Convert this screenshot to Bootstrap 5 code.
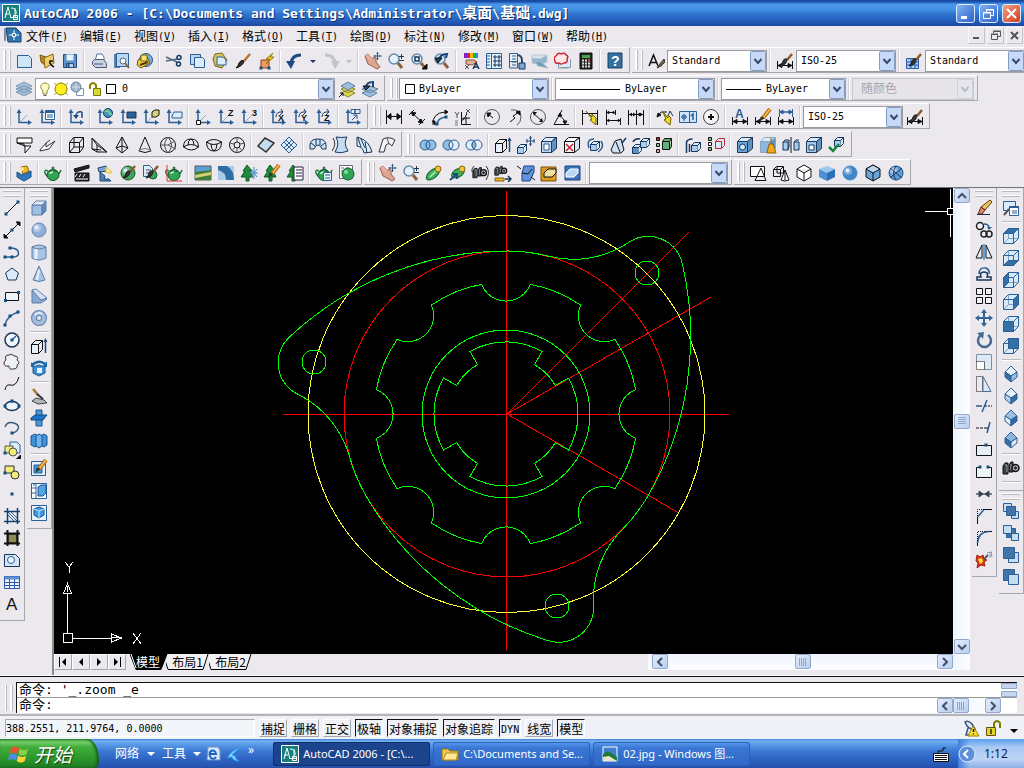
<!DOCTYPE html>
<html lang="zh-CN">
<head>
<meta charset="utf-8">
<meta name="viewport" content="width=device-width, initial-scale=1">
<title>AutoCAD 2006 - [C:\Documents and Settings\Administrator\桌面\基础.dwg]</title>
<link rel="stylesheet" href="https://cdn.jsdelivr.net/npm/bootstrap@5.3.0/dist/css/bootstrap.min.css">
<style>
:root{--face:#ebe9ed;--edge:#a7a6aa;--mono:"DejaVu Sans Mono","Noto Sans CJK SC",monospace}
body{background:var(--face);font:12px/16px "Noto Sans CJK SC",sans-serif;color:#000;min-height:100vh;overflow:hidden}
button{border:0;background:none;padding:0;color:inherit;font:inherit;line-height:16px}
svg{display:block;flex:none}
.lat{font-family:var(--mono);font-size:10px}
/* title and menu */
.titlebar{height:26px;padding:0 3px 0 2px;background:linear-gradient(#16459a 0,#1d55b4 2px,#4a96e6 4px,#4593e4 9px,#2f74cd 14px,#2560bf 20px,#1c479f 26px);color:#fff;text-shadow:1px 1px #0c2a6c;font:bold 13px/24px var(--mono)}
.titlebar .cjk{font-size:15px}
.winbtn{width:19px;height:19px;border:1px solid #dcebff;border-radius:3px;background:linear-gradient(135deg,#83b2f4,#2b62ca)}
.winbtn.shut{background:linear-gradient(135deg,#f0a184,#d23d1c)}
.menurow{height:21px;padding:0 1px 0 4px}
.menurow a{width:54px;height:20px;padding:2px 0 0 4px;color:#000;text-decoration:none;white-space:nowrap;display:block}
.menurow a .lat{vertical-align:1px}
.docbtn{width:17px;height:17px;margin:1px 0 0 2px;border:1px solid #f8f8fa;border-right-color:#c4c3c8;border-bottom-color:#c4c3c8}
/* toolbars */
.toolrow{height:28px}
.toolbox{height:26px;padding:2px 3px 0 12px;margin-right:2px;border:solid;border-width:1px 1px 1px 0;border-color:#fff var(--edge) var(--edge) #fff;position:relative;display:flex;align-items:center;flex:none}
.toolbox::before{content:"";position:absolute;left:3px;top:2px;bottom:2px;width:7px;border:solid #fff;border-width:0 2px;box-shadow:1px 0 #bab9be,inset 1px 0 #bab9be;border-right-width:1px}
.tool{width:23px;height:22px;display:flex;align-items:center;justify-content:center;flex:none}
.tool.slim{width:13px}
.cut{width:6px;height:22px;flex:none;background:linear-gradient(#cfced3,#cfced3) 2px 0/1px 100% no-repeat,linear-gradient(#fff,#fff) 3px 0/1px 100% no-repeat}
.vert{width:25px;height:auto;padding:9px 0 5px;flex-direction:column;margin:0 2px 0 0;border-width:0 1px 1px 0}
.vert::before{left:3px;right:3px;top:2px;bottom:auto;width:auto;height:6px;border-width:1px 0;box-shadow:0 1px #bab9be,inset 0 1px #bab9be}
.vert .cut{width:19px;height:6px;background:linear-gradient(#bab9be,#bab9be) 0 2px/100% 1px no-repeat,linear-gradient(#fff,#fff) 0 3px/100% 1px no-repeat}
.pick{position:relative;flex:none}
.pick select{width:100%;height:22px;border:1px solid #9a9aa2;border-radius:0;appearance:none;padding:0 18px 0 4px;color:#000;font:10px/18px var(--mono);background:#fff url("data:image/svg+xml,%3Csvg xmlns='http://www.w3.org/2000/svg' width='16' height='20'%3E%3Crect x='.5' y='.5' width='15' height='19' rx='1' fill='%23c8d9f7' stroke='%237f9dc2'/%3E%3Cpath d='M4.500 8l3.500 4 3.500-4' fill='none' stroke='%23354a6c' stroke-width='2'/%3E%3C/svg%3E") right center no-repeat}
.pick select:disabled{background-color:#e7e5ea;color:#a7a6aa;border-color:#c9c7ce;opacity:1;font-size:12px;background-image:url("data:image/svg+xml,%3Csvg xmlns='http://www.w3.org/2000/svg' width='16' height='20'%3E%3Crect x='.5' y='.5' width='15' height='19' rx='1' fill='%23e6e7ee' stroke='%23cfd1da'/%3E%3Cpath d='M4.500 8l3.500 4 3.500-4' fill='none' stroke='%23b9bcc9' stroke-width='2'/%3E%3C/svg%3E")}
.pick .over{position:absolute;left:4px;top:3px;pointer-events:none}
.w100{width:100px}.w125{width:125px}.w139{width:139px}.w150{width:150px}.w160{width:160px}.w122{width:122px}.w300{width:300px}
.pick.colour select{padding-left:19px}.pick.wide select{padding-left:69px}.pick.mid select{padding-left:44px}.pick.layer select{padding-left:86px}
.pick.faint select{padding-left:8px}
/* work area */
.work{border-top:1px solid #77767b;min-height:0}
.leftdock{width:54px;border-right:2px solid #8d8c92}
.rightdock{width:54px;padding-left:2px}
.paper{background:#000;min-width:0}
.paper svg{width:100%;height:100%}
.bar{background:linear-gradient(90deg,#eef3fd,#fdfeff);flex:none}
.bar.side{width:17px}
.bar.flat{width:305px;height:16px;background:linear-gradient(#eef3fd,#fdfeff)}
.nub{width:16px;height:15px;border:1px solid #93a9cc;border-radius:2px;background:linear-gradient(135deg,#e2ecfd,#bccfee);display:flex;align-items:center;justify-content:center;flex:none}
.tabs{height:16px;margin-bottom:5px;flex:none}
.step{width:18px;height:16px;border:1px solid;border-color:#fff var(--edge) var(--edge) #fff;display:flex;align-items:center;justify-content:center}
.sheet{position:relative;height:16px;width:43px;line-height:14px;z-index:0;text-align:center;white-space:nowrap}
.sheet svg{position:absolute;inset:0;z-index:-1}
.sheet.on{color:#fff;width:36px;z-index:1}
/* command window, status, taskbar */
.cmdwrap{border-top:1px solid #fff;padding:6px 7px 0 5px;height:39px;box-shadow:inset 0 1px #111}
.cmdgrip{width:7px;height:26px;margin:3px 4px 0 0;border:solid #fff;border-width:0 2px 0 1px;box-shadow:1px 0 #bab9be,inset 1px 0 #bab9be}
.cmdbox{border:solid #111;border-width:1px 0 0 1px;background:#fff;font:13px/14px var(--mono);height:31px}
.cmdbox .cjk{font-size:13px}
.cmdbox>div{height:14px;padding-left:2px;white-space:pre}
.cmdbox input{border:0;outline:0;padding:0;background:none;font:inherit;height:14px;min-width:0}
.cmdbox>div:first-child{border-bottom:1px solid #999;height:15px}
.status{height:25px;border-top:2px solid #b5b4b9;background:#f0f1f6;padding:1px 5px 0}
.coord{width:250px;height:18px;border:1px solid;border-color:#a9a8ae #fff #fff #a9a8ae;background:#f2f5fa;line-height:17px}
.mode{height:18px;padding:0 1px;border:1px solid;border-color:#fff #a7a6aa #a7a6aa #fff;background:#f0f1f6;white-space:nowrap;line-height:17px}
.mode.on{border-color:#111 #fff #fff #111}
.mode .lat{vertical-align:1px}
.task{height:29px;background:linear-gradient(#3f7fdb 0,#74b0f1 2px,#5b9cea 5px,#3c79d3 12px,#2f64c4 20px,#2450ab 29px);color:#fff;font-family:"Noto Sans","Noto Sans CJK SC",sans-serif}
.startbtn{width:99px;height:29px;border-radius:0 12px 4px 0/0 22px 8px 0;background:linear-gradient(#3f9e3c 0,#76cf6c 3px,#41ad3c 8px,#2e9a2d 18px,#1f7d23 29px);box-shadow:inset -2px 0 3px #135a18;text-shadow:1px 1px 1px #124515;font:italic 19px/26px "Noto Sans CJK SC",sans-serif}
.tasklist{padding-left:15px}
.taskbtn{width:157px;height:24px;margin-right:3px;border-radius:3px;background:linear-gradient(#5c9bec,#3a76d4 6px,#2f68c6);box-shadow:inset 0 0 0 1px #2c60bd;font-size:11px;white-space:nowrap;overflow:hidden}
.taskbtn.on{background:#1c448d;box-shadow:inset 0 0 0 1px #10306d}
.tray{width:66px;background:linear-gradient(90deg,#3f7ddb 0,#3f7ddb00 12px),linear-gradient(#5aa0ee,#a9c8f4 8px,#bcd3f5 20px,#8fb1e6);color:#0b1e4c;font-size:12px}
</style>
</head>
<body class="d-flex flex-column vh-100">
<header class="titlebar d-flex align-items-center">
  <span data-art="appicon" class="me-1"></span>
  <span class="flex-grow-1 text-nowrap">AutoCAD 2006 - [C:\Documents and Settings\Administrator\<span class="cjk">桌面</span>\<span class="cjk">基础</span>.dwg]</span>
  <div class="d-flex gap-1">
    <button class="winbtn" aria-label="最小化"><svg width="17" height="17"><path d="M4 12.500h6" stroke="#fff" stroke-width="3"/></svg></button>
    <button class="winbtn" aria-label="还原"><svg width="17" height="17" fill="none" stroke="#fff"><path d="M6.500 7V4.500h7v6H11M6 5h8M3.500 7.500h7v6h-7zM3 8h8"/></svg></button>
    <button class="winbtn shut" aria-label="关闭"><svg width="17" height="17"><path d="M4 4l9 9M13 4l-9 9" stroke="#fff" stroke-width="2"/></svg></button>
  </div>
</header>
<nav class="menurow d-flex align-items-start" aria-label="菜单">
  <span data-art="docicon"></span>
  <div class="d-flex flex-grow-1" id="menus"></div>
  <div class="d-flex">
    <button class="docbtn" aria-label="最小化文档"><svg width="15" height="15"><path d="M4 10h6" stroke="#555" stroke-width="2"/></svg></button>
    <button class="docbtn" aria-label="还原文档"><svg width="15" height="15" fill="none" stroke="#555"><path d="M5.500 5V3.500h7v5H10M3.500 6.500h6v5h-6zM3 6h7M5 3h8"/></svg></button>
    <button class="docbtn" aria-label="关闭文档"><svg width="15" height="15"><path d="M4 4l7 7M11 4l-7 7" stroke="#555" stroke-width="2"/></svg></button>
  </div>
</nav>

<div class="toolrow d-flex overflow-hidden">
  <div class="toolbox" data-tools="new open save | plot preview publish | cut copy paste match block | undo more redo moreoff | pan zoomrt zoomwin zoomprev | props dcenter palettes sheetset markup calc | help"></div>
  <div class="toolbox"><span data-tools="textstyle"></span>
    <div class="pick w100"><select aria-label="文字样式"><option>Standard</option></select></div><i class="cut"></i>
    <span data-tools="dimstyle"></span><div class="pick w100"><select aria-label="标注样式"><option>ISO-25</option></select></div><i class="cut"></i>
    <span data-tools="tablestyle"></span><div class="pick w100"><select aria-label="表格样式"><option>Standard</option></select></div>
  </div>
</div>
<div class="toolrow d-flex overflow-hidden">
  <div class="toolbox"><span data-tools="layers"></span>
    <div class="pick layer w300"><select aria-label="图层"><option>0</option></select><svg class="over" width="80" height="16"><use href="#layerflags"/></svg></div>
    <span data-tools="laycur layprev"></span>
  </div>
  <div class="toolbox">
    <div class="pick colour w150"><select aria-label="颜色"><option>ByLayer</option></select><svg class="over" width="16" height="16"><path d="M2.500 3.500h9v9h-9z" fill="#fff" stroke="#000"/></svg></div><i class="cut"></i>
    <div class="pick wide w160"><select aria-label="线型"><option>ByLayer</option></select><svg class="over" width="62" height="16"><path d="M1 8.500h60" stroke="#000"/></svg></div><i class="cut"></i>
    <div class="pick mid w125"><select aria-label="线宽"><option>ByLayer</option></select><svg class="over" width="36" height="16"><path d="M1 8.500h35" stroke="#000"/></svg></div><i class="cut"></i>
    <div class="pick faint w122"><select aria-label="打印样式" disabled><option>随颜色</option></select></div>
  </div>
</div>
<div class="toolrow d-flex overflow-hidden">
  <div class="toolbox" data-tools="ucs ucslist | ucsprev | ucsworld ucsobject ucsface ucsview | ucsorigin ucsz ucs3 | ucsrx ucsry ucsrz | ucsapply"></div>
  <div class="toolbox"><span data-tools="dimlin dimali dimarc dimord | dimrad dimjog dimdia dimang | dimquick dimbase dimcont | leader toler center | dimedit dimtedit dimupd |"></span>
    <div class="pick w100"><select aria-label="当前标注样式"><option>ISO-25</option></select></div><span data-tools="dimstyle"></span>
  </div>
</div>
<div class="toolrow d-flex overflow-hidden">
  <div class="toolbox" data-tools="solid2d face3d | mbox mwedge mpyr mcone msphere mdome mdish mtorus | edge mesh | revsurf tabsurf rulesurf edgesurf"></div>
  <div class="toolbox" data-tools="union subtract intersect | extface moveface offface delface rotface tapface copyface colface | copyedge coledge | imprint clean separate shell check"></div>
</div>
<div class="toolrow d-flex overflow-hidden">
  <div class="toolbox" data-tools="hide | render | scene light material matlib uvmap | backgr fog lsnew lsedit lslib | rprefs rstats"></div>
  <div class="toolbox"><span data-tools="pan zoomrt orbit orbitc swivel distance clipadj clipfront clipback |"></span>
    <div class="pick w139"><select aria-label="命名视图"><option></option></select></div></div>
  <div class="toolbox" data-tools="wire2d wire3d hidden flat gouraud flatedge gouedge"></div>
</div>

<main class="work d-flex flex-grow-1">
  <div class="leftdock d-flex align-items-start flex-shrink-0">
    <div class="toolbox vert" data-tools="line xline pline polygon rect arc circle cloud spline ellipse elarc insert mkblock point hatch gradient region table mtext"></div>
    <div class="toolbox vert" data-tools="sbox ssphere scyl scone swedge storus | extface revolve | slice section interfere | soldraw solview solprof"></div>
  </div>
  <div class="d-flex flex-column flex-grow-1">
    <div class="d-flex flex-grow-1 overflow-hidden">
      <div class="paper flex-grow-1">
        <svg viewBox="54 188 899 466" fill="none" shape-rendering="crispEdges" role="img" aria-label="图形">
          <g stroke="#f00"><path d="M506.500 191V650M283 414.500H729M507 414L689 232M507 414L711 297M507 414L679 513"/><circle cx="507" cy="414" r="163"/></g>
          <circle cx="506.500" cy="414" r="198.500" stroke="#ff3"/>
          <g stroke="#0f0">
            <circle cx="506" cy="414" r="84"/><circle cx="314" cy="362" r="12"/><circle cx="647" cy="273" r="12"/><circle cx="557" cy="606" r="12"/>
            <path d="M290 336.500A319 319 0 0 1 507 251A163 163 0 0 1 547.500 256A100 100 0 0 0 627 243.500A35 35 0 0 1 682.700 265.500A319 319 0 0 1 648.200 495.500A163 163 0 0 1 623.600 528.100A100 100 0 0 0 593.500 603.700A35 35 0 0 1 547.900 640.600A319 319 0 0 1 365.800 495.500A163 163 0 0 1 349.900 457.900A100 100 0 0 0 299 394.800A35 35 0 0 1 290 336.500Z"/>
            <path id="gear"/><path id="bore"/>
          </g>
          <g stroke="#fff"><path d="M63.500 633.500h9v9h-9zM67.500 633V594M73 638.500h38M63.500 593.500h8l-4-10zM67.500 592v-6M111.500 634v8l10-4zM112 637.500h8M925 211.500h22M950.500 189v19M950.500 215v22M947.500 208.500h6v6h-6z"/>
          <path d="M65 562l4 5 4-5M69.500 567v6M133 633l8 11M141 633l-8 11"/></g>
        </svg>
      </div>
      <div class="bar side d-flex flex-column justify-content-between align-items-center">
        <button class="nub" aria-label="向上"><svg width="10" height="8"><path d="M1 6l4-4 4 4" fill="none" stroke="#40506c" stroke-width="2"/></svg></button>
        <button class="nub" aria-label="滚动块"><svg width="8" height="8"><path d="M0 .5h8M0 2.500h8M0 4.500h8M0 6.500h8" stroke="#8fa6cc"/></svg></button>
        <button class="nub" aria-label="向下"><svg width="10" height="8"><path d="M1 2l4 4 4-4" fill="none" stroke="#40506c" stroke-width="2"/></svg></button>
      </div>
    </div>
    <div class="tabs d-flex">
      <button class="step" aria-label="第一个"><svg width="10" height="10"><path d="M1 0h1v10H1zM8 1v8L4 5z"/></svg></button>
      <button class="step" aria-label="上一个"><svg width="10" height="10"><path d="M7 1v8L3 5z"/></svg></button>
      <button class="step" aria-label="下一个"><svg width="10" height="10"><path d="M3 1v8l4-4z"/></svg></button>
      <button class="step me-1" aria-label="最后一个"><svg width="10" height="10"><path d="M8 0h1v10H8zM2 1v8l4-4z"/></svg></button>
      <button class="sheet on"><svg width="40" height="16"><path d="M0 0l6 15.500h25L37 0z" stroke="#000"/><path d="M1 0l5 14" stroke="#fff"/></svg>模型</button>
      <button class="sheet"><svg width="43" height="16"><path d="M-3 0l5 15.500h35L42 0" fill="#f2f1f5" stroke="#000"/></svg>布局1</button>
      <button class="sheet"><svg width="43" height="16"><path d="M-3 0l5 15.500h35L42 0" fill="#f2f1f5" stroke="#000"/></svg>布局2</button>
      <div class="flex-grow-1"></div>
      <div class="bar flat d-flex justify-content-between ps-1">
        <button class="nub" aria-label="向左"><svg width="8" height="10"><path d="M6 1L2 5l4 4" fill="none" stroke="#40506c" stroke-width="2"/></svg></button>
        <button class="nub" aria-label="水平滚动块"><svg width="8" height="8"><path d="M.5 0v8M2.500 0v8M4.500 0v8M6.500 0v8" stroke="#8fa6cc"/></svg></button>
        <button class="nub" aria-label="向右"><svg width="8" height="10"><path d="M2 1l4 4-4 4" fill="none" stroke="#40506c" stroke-width="2"/></svg></button>
      </div>
      <div class="bar side bg-transparent"></div>
    </div>
  </div>
  <div class="rightdock d-flex align-items-start flex-shrink-0">
    <div class="toolbox vert" data-tools="erase cpy mirror offset array move rotate scale stretch trim extend brkpt brk join chamfer fillet explode"></div>
    <div>
      <div class="toolbox vert" data-tools="namedview | vtop vbot vleft vright vfront vback | isw ise ine inw | camera |"></div>
      <div class="toolbox vert" data-tools="ordfront ordback ordabove ordunder"></div>
    </div>
  </div>
</main>

<section class="cmdwrap d-flex" aria-label="命令窗口">
  <div class="cmdgrip"></div>
  <div class="cmdbox flex-grow-1">
    <div class="d-flex"><span class="flex-grow-1"><span class="cjk">命令</span>: '_.zoom _e</span><svg width="16" height="14"><path d="M.5.5h15v5h-15zM.5 8.500h15v5h-15z" fill="#c6d6f0" stroke="#90a6c8"/></svg></div>
    <div class="d-flex"><label for="cmd"><span class="cjk">命令</span>:</label><input id="cmd" class="flex-grow-1">
      <span class="bar d-flex me-3"><button class="nub" aria-label="命令向左"><svg width="8" height="10"><path d="M6 1L2 5l4 4" fill="none" stroke="#40506c" stroke-width="2"/></svg></button><button class="nub me-3" aria-label="命令滚动块"><svg width="8" height="8"><path d="M.5 0v8M2.500 0v8M4.500 0v8M6.500 0v8" stroke="#8fa6cc"/></svg></button><button class="nub" aria-label="命令向右"><svg width="8" height="10"><path d="M2 1l4 4-4 4" fill="none" stroke="#40506c" stroke-width="2"/></svg></button></span></div>
  </div>
</section>
<section class="status d-flex align-items-center gap-1">
  <div class="coord lat">388.2551, 211.9764, 0.0000</div>
  <button class="mode">捕捉</button><button class="mode">栅格</button><button class="mode">正交</button><button class="mode on">极轴</button><button class="mode on">对象捕捉</button><button class="mode on">对象追踪</button><button class="mode on"><span class="lat">DYN</span></button><button class="mode">线宽</button><button class="mode on">模型</button>
  <div class="flex-grow-1"></div>
  <button aria-label="通信中心" data-art="comm"></button><button aria-label="锁定" data-art="lock" class="me-1"></button><button aria-label="状态栏菜单"><svg width="9" height="18"><path d="M0 10h8l-4 4z"/></svg></button>
</section>
<footer class="task d-flex align-items-center">
  <button class="startbtn d-flex align-items-center ps-2"><svg width="22" height="20" viewBox="0 0 22 20" class="me-1"><path d="M3 4q4-3 8 0L9.500 10q-4-3-8 0z" fill="#e8542c"/><path d="M12 4.500q4 3 8 0L18.500 10q-4 3-8 0z" fill="#8fd04a"/><path d="M1.200 11q4-3 8 0L8 16.500q-4-3-8 0z" fill="#4b8cf0"/><path d="M10.200 11.500q4 3 8 0l-1.500 5.500q-4 3-8 0z" fill="#fbd33c"/></svg>开始</button>
  <div class="d-flex align-items-center ps-3 flex-shrink-0">
    <button>网络</button><svg width="23" height="8"><path d="M8 2h8l-4 4z" fill="#fff"/></svg><button>工具</button><svg width="18" height="8"><path d="M7 2h8l-4 4z" fill="#fff"/></svg>
    <button aria-label="浏览器" class="me-1" data-art="ie"></button><button aria-label="快捷方式" data-art="swoosh"></button><button class="px-1 mb-2" aria-label="更多">»</button>
  </div>
  <div class="tasklist d-flex flex-grow-1" id="tasks"></div>
  <span data-art="keyboard" class="me-2"></span>
  <div class="tray h-100 d-flex align-items-center"><span data-art="traytog"></span><span class="ps-2">1:12</span></div>
</footer>
<svg width="0" height="0" class="position-absolute"><symbol id="layerflags" viewBox="0 0 80 16"><path d="M4 10C0 6 2 2 6 2s6 4 2 8v3H4z" fill="#fffbc0" stroke="#8a8440"/><path d="M4.500 14.500h3" stroke="#555"/><path d="M15 2l14 12M29 2L15 14" stroke="#b8a500"/><circle cx="22" cy="8" r="6" fill="#ffee22" stroke="#8a7c00"/><path d="M37.500 7.500h7v7h-7z" fill="#fff" stroke="#8794ac"/><circle cx="37" cy="6" r="5" fill="#9fb4cc" stroke="#66829f"/><path d="M33 6h8M37 2v8" stroke="#d6e2ee"/><path d="M51 8V4q3-4 6 0v7" fill="none" stroke="#8a8500" stroke-width="2"/><path d="M54.500 7.500h7v7h-7z" fill="#d8d838" stroke="#7a7800"/><path d="M67.500 3.500h9v9h-9z" fill="#fff" stroke="#000"/></symbol></svg>

<script src="https://cdn.jsdelivr.net/npm/bootstrap@5.3.0/dist/js/bootstrap.bundle.min.js"></script>
<script>
// Icon drawings on an 18 x 18 grid.
const p=(d,f='none',s='#111',w=1)=>`<path d="${d}" fill="${f}" stroke="${s}" stroke-width="${w}"/>`;
const o=(x,y,r,f='none',s='#111',w=1)=>`<circle cx="${x}" cy="${y}" r="${r}" fill="${f}" stroke="${s}" stroke-width="${w}"/>`;
const B='#2b5f97',D='#16365c',L='#a9cdee',P='#dcebf9',N='none';
const cube=(f=L,t=P,s='#5e93c4',k='#1f3a5a')=>p('M1.500 5.500h10v11h-10z',f,k)+p('M1.500 5.500l4-4h11l-5 4z',t,k)+p('M11.500 5.500l5-4v11l-5 4z',s,k);
const mini=(x,y)=>p(`M${x+.5} ${y+3.500}h6v6h-6z`,L,D)+p(`M${x+.5} ${y+3.500}l3-3h6l-3 3zM${x+6.500} ${y+3.500}l3-3v6l-3 3`,P,D);
const ucs=p('M4 3v11.500H15',N,B,1.500)+p('M1.500 5L4 1l2.500 4zM13 12l4 2.500-4 2.500z',B,B,0);
const axis=ucs+p('M5 14l7-7',N,'#8fa9c6',1);
const tx=(x,y,t,c='#111',s=9)=>`<text x="${x}" y="${y}" fill="${c}" font-family="Liberation Sans" font-weight="bold" font-size="${s}">${t}</text>`;
const brush=p('M16 2l-5 6',N,'#8d5a2a',2.500)+p('M11 7q0 6-7 7 3-3 3-5 1-3 4-2z','#333','#222');
const pencil=p('M16 1L9 10',N,'#b26a1c',4)+p('M16 1L9 10',N,'#f4b840',2)+p('M10 10l-4 3 1-4z','#333','#333');
const doc=(x,y,w=9,h=11)=>p(`M${x+.5} ${y+.5}h${w-3}l3 3v${h-3}h-${w}z`,P,B);
const lens=o(7,7,5,'#e2f1fb','#6a88a4',1.500)+p('M11 11l4 5',N,'#8d6238',3);
const dim=p('M1.500 9v8M16.500 9v8M2 13.500h14')+p('M2 13.500l4-2v4zM16 13.500l-4-2v4z','#111');
const tea=p('M4 7Q0 5 1 9q1 3 4 4M14 10q2-1 3-4','none','#1b7a3a',1.500)+`<ellipse cx="9" cy="11" rx="6" ry="5.500" fill="#30a556" stroke="#14582a"/>`+p('M5 7q4-3 8 0z','#6fd28c','#14582a')+o(9,4,1,'#6fd28c','#14582a')+p('M6 10q0-2 3-2',N,'#c8f4d3',1.500);
const tree=p('M7 1L3 7h2l-4 6h5v4h3v-4h4L10 7h2z','#1f8a3c','#115a24');
const ball=(c='#4d94d6',k='#1d4b80')=>o(9,9,7,c,k)+o(7,7,4,'#ffffff50',N,0)+o(6.500,6.500,2,'#e4f0fc',N,0);
const venn=(a,b,c)=>o(6,9,5,a,B)+o(12,9,5,b,B)+p('M9 5q4 4 0 8-4-4 0-8z',c,B);
const hand=p('M1 4l3-2 5 5 1-2 2 1v4l4 5-3 2-5-3-4-2z','#dca692','#9a5f4c')+p('M2 3l5 5M3.500 2l5 5',N,'#f0c5b4',1)+p('M13.500 0v8M9.500 4h8',N,'#33577f',1)+p('M12.500 1.500h2M12.500 6.500h2M11 3v2M16 3v2',N,'#33577f',1);
const sq=(x,y,w,f=P,k='#234')=>p(`M${x+.5} ${y+.5}h${w}v${w}h-${w}z`,f,k);
const dot=(x,y)=>`<rect x="${x-1.500}" y="${y-1.500}" width="3" height="3" fill="#14507e"/>`;
const circ=o(9,9,7.500,N,'#555',1);
const turn=p('M7 9q0-6 7-5l-2-3M14 4l-3 3',N,D,1);
const view=(f,t,s)=>p('M1.500 6.500l5-5h10v10l-5 5h-10z','#d8e9f8',B)+p('M6.500 1.500v10h10M6.500 11.500l-5 5',N,'#7ba2c8')+(f?p('M1.500 6.500h10v10h-10z',f,B):'')+(t?p('M1.500 6.500l5-5h10l-5 5z',t,B):'')+(s?p('M11.500 6.500l5-5v10l-5 5z',s,B):'')+p('M1.500 6.500h10v10M11.500 6.500l5-5',N,B);
const iso=(a,b,c)=>p('M9 1l6 6-6 4-6-4z',a,B)+p('M3 7l6 4v6l-6-5z',b,B)+p('M15 7l-6 4v6l6-5z',c,B);
const binoc=p('M1 7l2-3h3v11H1zM7 6l2-3h2v10H7z','#3c4148','#111')+p('M3 6h2v7M9 5v6',N,'#9aa2ac',1)+o(13.500,9,3.500,'#a9b0ba','#111',1.500)+o(13.500,9,1,'#333');
const I={
new:doc(2,3,14,12).replace(P,'#cfe5f8'),open:p('M2 3l6 2v9l-5-4z','#b38a28','#7d5c12')+p('M6 6l9-4 1 9-9 5z','#f0cf68','#8a6614')+p('M12 9q-1 3 4 6M12 12v-3h3',N,'#111',1.500),
save:p('M2.500 2.500h13v13h-13z','#5d93c8','#224e80')+p('M5.500 2.500h7v6h-7z','#e9f2fb','#9bb6d2')+p('M5.500 11.500h7v4h-7z','#c1cddb','#224e80')+p('M7.500 12v3',N,'#224e80',2),
plot:p('M5 9l2-7h5l2 3v4z','#fff','#5a7391')+p('M2.500 9.500l2-2h9l3 4v4h-11l-3-3z','#c9d1e4','#4b5a79')+p('M4 12h9',N,'#4b5a79'),
preview:p('M3.500 1.500h12v13h-12z','#bcd8f1',B)+p('M2 2v13h5',N,B,1.500)+o(10,9,3,'#eef8ff','#4a6a8a')+p('M12 11l4 5',N,'#8d6238',2),
publish:o(10,8,6.500,'#77add9','#2d5c86')+p('M2 8l9-3 3 6-9 5-4-3z','#f2cb45','#6f5412')+p('M5 3h6v6H5z','#ffe36a','#7a6210')+p('M4 13l8-3',N,'#4c3a0a',2),
cut:p('M1 5l11 5M1 9l11-2',N,'#5a6b7e',1.500)+o(14,5.500,2,N,D,1.500)+o(13.500,12,2,N,D,1.500),
copy:p('M2.500 2.500h10v10h-10z','#b7d5ef',B)+p('M6.500 5.500h8l2 2v8h-10z',P,B),
paste:p('M4 2l7-1 5 7-5 8-7-2-2-7z','#d5c261','#7b6a1c')+p('M6 5h6l3 3v5H6z',P,B),match:p('M16 2l-6 7',N,'#b77232',2.500)+p('M10 9q-1 5-8 7 3-3 3-5 2-4 5-2z','#36302c','#111'),
block:p('M4 8h8v8H4z','#f09a64','#8c3d10')+p('M16 1l-7 6h4l-4 5 8-7h-4z','#ffd61f','#96750a')+dot(4,16)+dot(12,16),
undo:p('M15 3Q6 3 5 11',N,'#1f4a80',3)+p('M0 9h9l-4 8z','#1f4a80','#1f4a80',0),redo:p('M3 3q9 0 10 8',N,'#c3c3cb',3)+p('M9 9h9l-5 8z','#c3c3cb','#c3c3cb',0),
more:p('M6 8h6l-3 3z','#25326a',N),moreoff:p('M6 8h6l-3 3z','#bbb',N),
pan:hand,zoomrt:lens+p('M12 4.500h5M14.500 2v5M12 8.500h5',N,D),zoomwin:lens+p('M5 5h4v4H5z',N,D,1.500)+p('M17 12v5h-5z','#111'),zoomprev:lens.replace('#e2f1fb','#cfe2f2')+p('M6 8q1-6 8-6l-1 4',N,'#174276',2)+p('M2 6h7l-4 5z','#174276'),
props:p('M2 1h3v5H2z','#7722cc',N)+p('M5 1h3v5H5z','#e92020',N)+p('M8 1h3v5H8z','#f5b400',N)+p('M11 1h3v5h-3z','#18b418',N)+p('M14 1h2v5h-2z','#1d8df0',N)+p('M4 8h8l3 2-5 3-6-1z','#e3b09b','#8a5745')+p('M11 17l3-6 3 6M12 15h4',N,D,1.500)+p('M3 13l4 4M7 13l-4 4',N,'#555'),
dcenter:sq(1,1,15,'#e8f3fc',B)+p('M6.500 1v15M2 4h3M2 7h3M2 10h3M2 13h3',N,B)+p('M9 4h2v2H9zM13 4h2v2h-2zM9 8h2v2H9zM13 8h2v2h-2zM9 12h2v2H9zM13 12h2v2h-2z',N,D),
palettes:sq(1,1,8,'#e8f3fc',B)+p('M1.500 9v7h8V9M4 4h4M4 7h4M4 10h4M4 13h4',N,B,1)+p('M9 3q5 0 5 6M14 9v3',N,'#26466c',2)+p('M11 11h6v6h-6z','#7eaad2',D),
sheetset:p('M1 3h14v5H1z','#d8e4ee','#b9c7d4')+p('M1 6l8 1 7-4v7l-7 3-8-2z','#8fb5cf','#b7c9d6')+p('M4 9l6 1 7 6-10-2z','#6f9bb9','#a9bac8'),
markup:p('M4.500 7v9h10M6.500 15.500h10V7',P,'#8a99aa')+p('M2 4q2-4 5-2 4-2 5 1 3 1 1 4 1 4-3 4-3 2-5 0-4 1-4-2-2-3 1-5z','#fde8e8','#d32638',1.500),
calc:p('M3 1h12v16H3z','#222','#111')+p('M5 3h8v3H5z','#47a34c',N)+p('M5 8.500h8M5 11.500h8M5 14.500h8',N,'#ddd',2)+p('M7.500 7v9M10.500 7v9',N,'#222')+p('M11 8.500h2',N,'#d33',2),
help:p('M2 1h14v15H2z','#356f9f','#184566')+tx(5,14,'?','#fff',14),
textstyle:p('M2 14L6.500 3l4.500 11M4 10.500h5',N,'#111',1.500)+p('M17 7l-5 6-2 3 4-2 4-4z','#806040','#333'),dimstyle:dim+brush,tablestyle:p('M1.500 6.500h12v10h-12zM1.500 10h12M1.500 13h12M6 7v9M10 7v9','#a8cdf5','#2c5aa8')+brush,
layers:p('M1 12l8-3 8 3-8 4zM1 9l8-3 8 3-8 4zM1 6l8-4 8 4-8 4z','#a3bfda','#7d99b5'),
laycur:p('M3 13l7-3 7 3-7 4zM3 9l7-3 7 3-7 4z','#dcd95c','#88841d')+p('M3 6l7-4 7 4-7 4z','#9fbfdc','#5f7f9e')+p('M1 17l4-4M2 13h3v3',N,'#111',1),
layprev:p('M1 13l8-3 7 3-7 4zM1 9l8-3 8 3-8 4z','#9fbfdc','#5f7f9e')+p('M5 8q0-6 7-6v5',N,'#1f4a80',2)+p('M2 6h7l-4 4z','#1f4a80'),
ucs:axis,ucslist:ucs+sq(7,2,9,'#fff',B)+p('M7 4h10',N,B,2)+p('M9 7h6M9 9h6',N,B),ucsprev:ucs+p('M15 4q-6-1-6 4M15 4v6',N,'#1f4a80',1.500)+p('M6 7h6l-3 4z','#1f4a80',N),
ucsworld:ucs+o(12,5,4.500,'#3f92c4',D)+p('M9 4q3-3 4 0t3 2',N,'#7fd08f',2),ucsobject:ucs+p('M8 4h9v6H8z','#2c5f98',D),ucsface:axis+p('M10 4l3-2h4v5l-3 2h-4z','#d8d37a','#111'),ucsview:ucs+p('M7 8l2-4h8v6H7z',P,B),
ucsorigin:axis+sq(2,12,4,'#fff','#111'),ucsz:axis+tx(11,8,'Z'),ucs3:axis+tx(12,8,'3'),
ucsrx:ucs+turn+tx(9,13,'X'),ucsry:ucs+turn+tx(9,13,'Y'),ucsrz:ucs+turn+tx(9,13,'Z'),
ucsapply:ucs+p('M7 1.500h4v4H7zM11 1.500h5v4h-5zM8 12l5-5M9 7h4v4',N,B),
dimlin:p('M1.500 2v14M16.500 2v14M2 8.500h14')+p('M2 8.500l4-3v6zM16 8.500l-4-3v6z','#111'),dimali:p('M1 7l5-5M11 17l6-6M4 5l10 9',N,'#111',1)+p('M3 4l5 1-3 3zM15 15l-5-1 3-3z','#111'),
dimarc:p('M2 17Q1 5 14 4',N,'#111')+p('M6 17q0-7 9-8',N,B,1.500)+dot(6,16)+dot(15,9)+p('M14 2v4l3-2zM1 13h3v4z','#111'),dimord:p('M7.500 4v12.500H17M7 10q4 2 6-5M12 9v7M7 13q4-4 9-3')+p('M1 4l2 3 2-3M3 7v3M12 1l4 4M16 1l-4 4',N,'#555')+p('M1 13h3M1 15h3M1 17h3',N,'#777'),
dimrad:circ+p('M10 10L5 6',N,'#111')+p('M4 5h4L5 9z','#111'),dimjog:p('M5 2q10-1 10 7 0 5-4 8',N,'#555')+p('M4 14l5-4-2-2 6-4',N,'#111')+p('M14 3v4l-4-3z','#111'),dimdia:circ+p('M4 5l9 8')+p('M4 4h4L5 8zM14 14h-4l3-4z','#111',N),dimang:p('M17 16.500H2L10 2M7 8q6 2 6 8')+p('M6 8h4L8 5zM11 13h4l-2 3z','#111'),
dimquick:p('M1.500 2v15M16.500 2v15M2 5.500h14')+p('M5 3l6 6V6l4 4v7l-6-5 2-1z','#f1dc28','#6b5c00'),dimbase:p('M2.500 2v15M11.500 2v5M16.500 10v7M3 4.500h8M3 12.500h13')+p('M3 4.500l2-1v2zM3 12.500l2-1v2zM11 4.500l-2-1v2zM16 12.500l-2-1v2z','#111'),dimcont:p('M1.500 2v15M9.500 2v15M16.500 2v15M2 6.500h14')+p('M2 6.500l3-2v4zM9 6.500l-3-2v4zM10 6.500l3-2v4zM16 6.500l-3-2v4z','#111',N),
leader:p('M1 9l4-5h6',N,'#111')+p('M12 8l2-5 3 5',N,D)+p('M1 9l1-4 3 2z','#111')+p('M7 4l5 6V7l3 3-1 7-6-5 2-1z','#f1dc28','#6b5c00'),toler:p('M.5 3.500h17v11H.5z','#d0e5f7',B)+p('M10.500 4v11M5 6v7M2 9h6',N,B)+o(5,9,2,N,B)+p('M12 8l2-2v6',N,B,1.500),center:o(9,9,7.500,'#f6f6f8','#444')+p('M9 6v6M6 9h6',N,'#111',2),
dimedit:dim+tx(4,10,'A',B,12),dimtedit:dim+pencil,dimupd:dim+p('M3 4h12',N,B,1.500)+p('M2.500 1v8M15.500 1v8M3 4l3-2v4zM15 4l-3-2v4z',B,B),
solid2d:p('M2 2h15v5H2zM2 7l7 1v2h7l-6 7V10z','#fff'),face3d:p('M2 14l6-7v4l9-6-6 8-9 2zM8 7l4-3','#fff','#333'),
mbox:p('M2.500 6.500h10v10h-10zM2.500 6.500l4-5h10l-4 5M16.500 1.500v10l-4 5M7 2v9h9M7 11l-4 5'),mwedge:p('M2 2v11l5 3h10L2 2l5 7v7M7 9l10 7M2 13l9 1'),mpyr:p('M9 1L3 12l6 5 6-5L9 1v16M3 12l6-2 6 2'),mcone:p('M9 1L3 15q6 3 12 0z')+p('M3 14q6-3 12 0',N,'#777'),
msphere:o(9,9,7.500)+p('M9 1q-7 8 0 16M9 1q7 8 0 16M9 9l7-4M9 9l8 4M9 9H1',N,'#555'),mdome:p('M1.500 11q0-8 7.500-8t7.500 8q-7 6-15 0zM1.500 11q7-5 15 0M6 9q0-5 3-6M12 9q0-5-3-6'),mdish:p('M1.500 6q7-5 15 0 0 9-7.500 9T1.500 6q7 5 15 0M6 8q0 5 3 7M12 8q0 5-3 7'),mtorus:o(9,9,7.500)+o(9,9,3)+p('M9 1v5M9 12v5M1 7l5 1M17 7l-5 1M4 15l3-4M14 15l-3-4',N,'#555'),
edge:p('M1 10l7-8 9 5-8 9z','#c4dcf2','#333',1.500),mesh:p('M1 9l8-8 8 8-8 8z',P,B)+p('M4 6l8 8M6 4l8 8M4 12l8-8M6 14l8-8',N,B),revsurf:p('M1 13V9q0-6 8-6t8 6v4h-4q-1-4-4-4t-4 4z','#cfe2f4',D)+p('M2 7l4 3M16 7l-4 3M7 3v6M11 3v6',N,D),tabsurf:p('M4 1q5 1 11 0-4 6 1 14-7 3-13 1Q8 8 4 1z','#c4dcf2',D)+p('M1 2q4 6-1 13',N,'#333'),rulesurf:p('M2 1l3 1q9 3 12 14l-8 1Q8 11 2 10z',P,D)+p('M3 2l3 9M6 3l4 9M10 6l2 11',N,D),edgesurf:p('M1 16L5 3q6-3 12 1l-3 6q-3-4-6-1l-2 7z','#eef4fa','#333',1)+p('M9 2l2 6',N,'#555'),
union:venn('#8fbfe0','#8fbfe0','#8fbfe0'),subtract:venn('#8fbfe0','#e6eef7','#e6eef7'),intersect:venn('#e6eef7','#e6eef7','#8fbfe0'),
extface:p('M1.500 7.500h7v9h-7zM1.500 7.500l4-4h7l-4 4zM8.500 16.500l4-4v-9','#e6f0f8','#111')+p('M15.500 16V3',N,'#1f4a80',1.500)+p('M13.500 5l2-4 2 4z','#1f4a80',N),moveface:mini(0,8)+p('M13.500 0v10M9 5h9M12 2h3M12 8h3M10 3v4M17 3v4',N,'#264e7e'),offface:cube('#bcd7ee')+p('M4 8h5v6H4z','#fff',B),delface:cube('#f0f5fa','#fff','#d5e4f2','#111')+p('M3 8l7 7M10 8l-7 7',N,'#c8202c',1.500),
rotface:mini(4,5)+p('M3 12Q0 3 8 3M15 5q4 6-3 11',N,B,1.500),tapface:p('M2 14l4-9 6-2 3 11-3 3H4z','#cfe2f4','#111')+p('M7 6l4 10',N,'#111')+p('M17 2l-4 5',N,D,1.500),copyface:mini(0,8).replace(L,'#5e93c4')+mini(8,2)+p('M1 6q2-4 7-3',N,D,1.500),colface:sq(1,1,3,'#c22','#111')+sq(1,7,3,'#7ed08c','#111')+sq(1,13,3,'#e7a9c5','#111')+p('M7.500 5.500h7v8h-7zM7.500 5.500l2-3h7l-2 3M14.500 13.500l2-3v-8','#5cb277','#111'),
copyedge:mini(7,6)+p('M2.500 17V6q1-3 6-3M5.500 16V8',N,D,1.500),coledge:sq(1,1,3,'#8c8','#111')+sq(1,6,3,'#fff','#111')+sq(1,11,3,'#8c8','#111')+p('M8.500 5.500h6v7h-6zM8.500 5.500l3-3h6v7l-3 3',P,'#c8202c'),
imprint:cube('#6ba4d8')+o(6.500,11,3,'#d5e8f7',D),clean:cube('#8fb6dc',P,'#5e93c4','#8ba6c2')+p('M12 2v6M8 17l2-9h4l3 9z','#f0a81c','#8f5f08',1),separate:p('M1 6h5v8H1zM12 6h5v8h-5zM1 6l2-2h4v7l-1 3M12 6l2-2h3',L,D)+p('M9 1v16',N,'#111'),shell:cube('#9ec8ea')+p('M4 9h5v5H4z','#fff',D,1),check:mini(6,1)+p('M1 11l4 4 6-7',N,'#16863c',2.500),
hide:p('M2 8l5 3 9-4v6l-7 4-7-4z','#2f78bd','#174a7c')+p('M6 3l6-1 2 5-6 3z','#f0b92c','#8a6410')+o(7,5,2,'#ffe683',N,0),render:tea,scene:p('M1 5l15-4v3L2 8z','#222')+p('M2 9h14v8H2z','#222')+p('M4 10l-2 3M8 10l-2 3M12 10l-2 3M3 15h12',N,'#fff'),light:p('M2 4l8-2 2 5-9 1z','#7ba7d4','#1b4672')+p('M10 3l6 5q-2 3-6 0z','#ffe98c','#d8c050')+p('M4 8l5 4-1 3h5l2 2H4z','#4f80b4','#1b4672'),material:ball('#3aa55c','#14582a')+brush,matlib:doc(1,1)+p('M4 6h5M4 9h5',N,'#444')+o(11,11,4,'#3aa55c','#14582a')+brush,uvmap:tea+p('M2 1v16h15',N,'#d33'),
backgr:p('M1 2h16v14H1z','#5ca0d8','#555')+p('M1 8l16-2v10H1z','#3e7e36',N)+p('M1 11l16-3v3L1 14z','#d8cf7a',N),fog:p('M1 2h16v14H1z','#a9cce8',N)+p('M1 2h9q7 4 7 14H9Q9 8 1 6z','#2e6da5',N),lsnew:tree+p('M14 3v12M9 9h9M11 5l6 8M17 5l-6 8',N,'#4488cc'),lsedit:tree+pencil,lslib:tree+p('M8 3h9v13H8z','#fff','#224')+p('M10 6h6M10 9h6M10 12h6',N,'#224'),rprefs:tea+sq(8,8,8,'#e8f2fb',B)+p('M10 11h5M10 14h5',N,B),rstats:sq(1,1,13,'#fff','#668')+p('M3 4h3M8 4h3M3 7h3',N,'#668')+o(10,10,6,'#30a556','#14582a')+o(8,8,2,'#86dba0',N,0),
orbit:`<ellipse cx="8" cy="10" rx="8" ry="4" transform="rotate(-40 8 10)" fill="#3eb35c" stroke="#17612d"/>`+p('M5 13l6-6',N,'#b8f0c8',1.500)+o(13,5,3,'#f0c040','#8a6410'),orbitc:`<ellipse cx="10" cy="9" rx="7" ry="4" transform="rotate(-30 10 9)" fill="#3eb35c" stroke="#17612d"/>`+p('M2 16l7-6M5 10h4v5',N,'#1f4a80',2)+o(14,5,3,'#f0c040','#8a6410'),swivel:`<g transform="translate(1 1) scale(.85)">${binoc}</g>`+p('M15 2q5 6 0 14M3 2q-3 3-2 6',N,'#333'),distance:`<g transform="scale(.75)">${binoc}</g>`+p('M1 14h9v3H1z','#f0b030','#85600c')+p('M11 15h5M14 12l3 3-3 3',N,D,1.500),clipadj:p('M7 2h10v6l-4 9H5V9z','#5f95d8','#1b3f8a')+p('M5 9l6 1 4-5M0 2l4 3M14 13l4 3',N,'#111'),clipfront:p('M1 3h15v14H1z','#d99a20','#7a5208')+p('M4 9l4-4h8v4l-4 4H4z','#f0e0a0','#111'),clipback:p('M2 2h15v14H2z','#3f74bd','#1b3f7a')+p('M3 9l4-4h8v4l-4 4H3z','#bcd7f3','#fff'),
wire2d:p('M1.500 2.500h14v10h-14z','#fff')+p('M12 4L6 16.500h11z'),wire3d:p('M1.500 5.500h7v7h-7zM1.500 5.500l3-3h7l-3 3M11.500 3v6M5 3v6h6')+p('M13 6L9 16q4 2 8 0zM13 6v10','#fff'),hidden:p('M9 1l7 4v8l-7 4-7-4V5zM2 5l7 4 7-4M9 9v8','#fff','#111'),flat:p('M9 2l8 3-8 4-8-4z','#9cc7ec',N)+p('M1 5l8 4v8l-8-4z','#4d8fd0',N)+p('M17 5L9 9v8l8-4z','#2f6fb5',N),gouraud:ball('#3f87c9','#3f87c9'),flatedge:p('M9 1l7 4v8l-7 4-7-4V5z','#6ba4d8')+p('M2 5l7-4 7 4-7 4z','#b9d7f2')+p('M9 9v8'),gouedge:ball('#5c9bd4','#24507e')+p('M3 4l12 10M15 4L3 14M9 2q-5 7 0 14',N,D),
line:p('M3 15L15 3')+dot(3,15)+dot(15,3),xline:p('M2 16L16 2')+p('M1 17v-4l4 4zM17 1v4l-4-4z','#111')+dot(9,9),pline:p('M2 14h9M10 14q7 0 5-6-2-3-7-3',N,B,1.500)+dot(2,14)+dot(9,14)+dot(7,5),polygon:p('M9 3l6.500 5-2.500 7H5L2.500 8z',P,D),rect:p('M2.500 5.500h13v8h-13z','#eef4fb')+dot(2.500,13.500)+dot(15.500,5.500),arc:p('M2 16Q4 6 16 3',N,B,1.500)+dot(2,16)+dot(7,7)+dot(15,3),circle:o(9,9,7,'#eef5fb',D,1.500)+p('M9 9l4-4',N,B,1.500)+dot(9,9),cloud:p('M3 7q-2-5 3-5 3-2 5 1 5 0 3 4 4 3 0 5 1 4-4 4-4 1-4-3-5 1-5-3 0-2 2-3z','#eef2f6','#333'),spline:p('M2 15q1-6 5-5 6 2 9-8'),ellipse:`<ellipse cx="9" cy="9" rx="7" ry="4.500" fill="#eef5fb" stroke="#16365c" stroke-width="1.500"/>`+dot(2,9)+dot(16,9)+dot(9,4),elarc:p('M2 8q2-6 9-4 6 2 4 6-2 4-7 4',N,'#3b5c7e',1.500)+dot(9,14),
insert:p('M7 1h7l3 3v8H7z',P,B)+p('M2 5h8v7H2z','#f0ec7a','#555')+o(10,11,4,'#f0ec7a','#555')+dot(2,12)+p('M17.500 14v4h-4z','#111'),mkblock:p('M2 3h9v7H2z','#f0ec7a','#333')+o(12,12,4,'#f0ec7a','#333')+dot(2,10),point:dot(9,9),hatch:p('M4.500 1v16M14.500 1v16M1 4.500h16M1 14.500h16',N,'#14406e',1.500)+p('M5 8l6 6M5 5l9 9M8 5l6 6',N,B),gradient:p('M5 5h9v9H5z','#8d8a55')+p('M4.500 1v16M14.500 1v16M1 4.500h16M1 14.500h16',N,'#111',2),region:p('M1.500 3.500h11l4 4v8h-15z','#d5e5f5',D)+o(8,9,3.500,'#eef5fb',B),table:p('M1.500 3.500h15v12h-15z','#eef5ff','#2c5aa8')+p('M2 5h14',N,'#5f92d8',3)+p('M2 9.500h14M2 12.500h14M6.500 6v9M11.500 6v9',N,'#2c5aa8'),mtext:`<text x="3" y="15" font-family="Liberation Sans" font-size="17" fill="#111">A</text>`,
sbox:p('M2 6h10v10H2z','#9fbfe2','#5e7fa8')+p('M2 6l4-4h10l-4 4z','#e3eefa','#5e7fa8')+p('M12 6l4-4v10l-4 4z','#6288b8','#5e7fa8'),ssphere:ball('#8fafd6','#6786b0'),scyl:p('M2 4q7-4 14 0v11q-7 4-14 0z','#a9c3e2','#5e7fa8')+p('M2 4q7 4 14 0',N,'#5e7fa8')+p('M6 6v10',N,'#e8f2fc',3),scone:p('M9 1l6 14q-6 3-12 0z','#a9c3e2','#5e7fa8')+p('M9 5L7 15',N,'#eef6fd',2),swedge:p('M2 3v13h9l6-4z','#89a9d0','#5e7fa8')+p('M2 3l4-1 11 9-6 2z','#d4e2f2','#5e7fa8'),storus:o(9,9,5,N,'#5e7fa8',6)+o(9,9,5,N,'#a3bddd',4)+p('M5 6q3-4 7-1',N,'#eef6fd',1.500),
revolve:p('M3 8l6-2 6 2v6l-6 3-6-3z','#3f8fd8','#1c528c')+p('M7 9h5v5H7z','#e8f4fe',N)+p('M2 6q7-6 13-1',N,'#1c66a8',2.500)+p('M17 2v6h-5zM1 3v5h4z','#1c66a8',N),slice:p('M2 14l4-3 8 2 3 3-9 1z','#b0b8c2','#444')+p('M3 2l5 6',N,'#b07030',2.500)+p('M7 7l6 5',N,'#333',2),section:p('M6 1h6v16H6z','#4c97d8','#1c528c')+p('M1 9l4-3h12l-4 5H1z','#1d74c8','#174a7c'),interfere:p('M1 5l4-2 3 2v9l-3 2-4-2zM10 5l4-2 3 2v9l-3 2-4-2z','#3f92dc','#1c528c')+p('M6 5l3-2 3 2v10l-3 2-3-2z','#6fb4ec','#1c528c'),soldraw:sq(1,2,14,'#e7f2fc',B)+p('M4 6h8v8H4z','#3f9be0',B)+pencil,solview:sq(1,2,15,'#fff',B)+p('M6 3v14M2 7h4M2 12h4M3 4h2',N,B)+p('M8 6l3-2h5v8l-3 3H8z','#55a5e0','#1c528c'),solprof:sq(1,2,15,'#e7f2fc',B)+p('M9 4l5 2v6l-5 3-5-3V6z','#3f9be0','#1c528c')+p('M4 6l5 2 5-2M9 8v7',N,'#c8e4fb'),
erase:p('M2 15.500h13',N,'#1b2a50')+p('M15 1l2 2-7 8-4-3z','#f0c060','#5a3a10')+p('M6 8l4 3-3 4H3z','#e38470','#5a2a20'),cpy:o(5,5,3.500,'#e8f0f8','#222',1.500)+o(9,13,3,'#e8f0f8','#222',1.500)+o(14,13,3,N,'#222',1.500)+p('M9 3q5 0 5 4',N,B,1.500)+p('M12 6h5l-3 3z',B,N),mirror:p('M7 2v13H1zM11 2v13h6z','#e3edf6')+p('M9 1v16',N,'#2c8ad0',1.500),offset:p('M2 15h14v-3h-4q2-5-3-5t-3 5H2z',N,D,1.500)+p('M4 9q0-7 7-6 4 2 3 6',N,B,1.500),array:sq(1,1,6,'#f0f4f8','#111')+sq(10,1,6,'#f0f4f8','#111')+sq(1,10,6,'#f0f4f8','#111')+sq(10,10,6,'#f0f4f8','#111'),
move:p('M9 2v14M2 9h14',N,'#34659a',2)+p('M9 0l3 4H6zM9 18l3-4H6zM0 9l4-3v6zM18 9l-4-3v6z','#34659a',N),rotate:p('M6 4A6.500 6.500 0 1 0 13 4',N,'#446a92',2.500)+p('M2 2l7-1-1 7z','#446a92',N),scale:p('M1.500 1.500h15v15h-7v-7h-8z','#dfe9f3','#7890a8')+`<path d="M1.500 8.500h8v8h-8z" fill="#fff" stroke="#111" stroke-dasharray="1 1"/>`,stretch:`<path d="M1.500 1.500h6v15h-6z" fill="none" stroke="#111" stroke-dasharray="1 1"/>`+p('M8 1.500l8 15H8z','#dfe9f3','#4b6f94'),trim:p('M1 9h6M12 3L7 15',N,B,1.500)+p('M10 9h2M13 9h2M16 9h1',N,'#111'),extend:p('M15 3l-3 11',N,B,1.500)+p('M1 9h3M5 9h3M9 9h4',N,'#111'),brkpt:p('M1.500 4.500h15v10h-15z','#e6eef6')+dot(11,4),brk:p('M5 4.500H1.500v10h15v-10H13','#eef3f8')+dot(5,4)+dot(13,4),join:p('M1 9h16')+p('M4 6v6l4-3zM14 6v6l-4-3z','#345','#345'),chamfer:p('M2.500 17v-7M9 2.500h8',N,'#111')+p('M2.500 10L9 2.500',N,B,1.500)+`<path d="M2.500 9V2.500H9" fill="none" stroke="#111" stroke-dasharray="1 1"/>`,fillet:p('M2.500 17v-3M14 2.500h3')+p('M2.500 14Q3 3 14 2.500',N,B,1.500)+`<path d="M2.500 12V2.500H12" fill="none" stroke="#111" stroke-dasharray="1 1"/>`,explode:p('M2 4l3 2 3-2 1 4 3 1-3 2 1 4-4-1-4 3 1-5-2-2z','#d9381e','#a02010')+p('M3 8l4-1 1 4-3 2z','#ffdc3a',N)+p('M9 8l4-4',N,'#555',2)+p('M12 2l5-1M15 3v4M16 1l1 5',N,'#7c91b8'),
namedview:p('M1.500 2.500h12v9h-12z',P,B)+sq(7,7,9,'#fff',B)+p('M7 8h10',N,B,2)+p('M10 12h5M10 14h5',N,B)+p('M2 16l5-6',N,'#555',2),vtop:view(0,'#356fa8',0),vbot:view(0,0,0)+p('M1.500 16.500l5-5h10l-5 5z','#356fa8',B),vleft:view(0,0,0)+p('M1.500 6.500l5-5v10l-5 5z','#356fa8',B),vright:view(0,0,'#356fa8'),vfront:view('#356fa8',0,0),vback:view(0,0,0)+p('M6.500 1.500h10v10h-10z','#356fa8',B),isw:iso('#e6f1fb','#356fa8','#9cc0e2'),ise:iso('#e6f1fb','#b9d3ec','#356fa8'),ine:iso('#9cc0e2','#e6f1fb','#2f6aa2'),inw:iso('#8db6dc','#356fa8','#dceaf7'),camera:binoc,
ordfront:sq(1,1,8,'#c6dcf0',B)+sq(9,9,7,'#c6dcf0',B)+sq(4,4,9,'#3f75a8',B),ordback:sq(4,4,9,'#3f75a8',B)+sq(1,1,8,'#c6dcf0',B)+sq(9,9,7,'#c6dcf0',B),ordabove:sq(6,6,10,'#c6dcf0',B)+sq(1,1,11,'#3f75a8',B),ordunder:sq(1,1,11,'#3f75a8',B)+sq(6,6,10,'#c6dcf0',B),
appicon:p('M.5.500h17v17H.5z','#17807c','#fff')+p('M3 14L6 3l3 11M3 10h4M9 13.500h7M13 4v9M9 4q6 0 5 6M11.500 11.500h4v4h-4z',N,'#fff'),docicon:p('M2 2h10l5 5v9H4z','#2e75ab','#13466e')+p('M10 4v10M5 9h10',N,'#fff')+sq(8,7,3,'#2e75ab','#fff')+p('M1 2v13',N,'#88a',2),
comm:p('M3 3q3-2 7 2l3 5q-7 1-10-7zM6 9l-2 7h5',P,'#3f5474',1.500)+p('M11 7l6 10H6z','#ffe03a','#9a7f00')+p('M11.500 10v3M11.500 14.500v1',N,'#111',1.500),lock:p('M10 8V4q3-4 6 0v5',N,'#7d7a00',2)+p('M2.500 8.500h9v8h-9z','#e8d52a','#5c5400')+p('M7 10v5',N,'#5c5400',2),
ie:p('M4 2h10l2 3v10H3z','#d7e8fa','#6f93c0')+p('M12 12q-2 3-5 1-3-4 0-7 4-2 5 3H6',N,'#1b62c0',2),swoosh:p('M16 2Q8 4 4 9q-2 3-3 4 3-1 5-1 1 4 7 4-4-2-4-5-2-1-3-1 4-5 10-8z','#8ad4ff','#2a9af0'),keyboard:p('M1.500 8.500h15v8h-15z','#fff','#111')+p('M3 10.500h12M3 12.500h12M3 14.500h12',N,'#111')+p('M6 8V6h5V3h3',N,'#111'),traytog:o(9,9,8,'#5c8fdc','#dceaff')+p('M10 5L6 9l4 4',N,'#fff',2),
folder:p('M1 4h6l2 2h8v9H1z','#f2c94c','#9a7414')+p('M2 15l3-7h12l-2 7z','#ffe995','#b48c20'),photo:p('M2 2h14v14H2z','#3f7fd0','#fff')+p('M2 9l5-3 9 6v4H2z','#1d7a34',N)+p('M2 12l6-1 8 5H2z','#e9e5c8',N)
};
const svg=n=>`<svg width="18" height="18" viewBox="0 0 18 18">${I[n]}</svg>`;
document.querySelectorAll('[data-tools]').forEach(box=>{
  if(box.tagName==='SPAN')box.className='d-flex';
  box.innerHTML=box.dataset.tools.trim().split(/\s+/).map(n=>n==='|'?'<i class="cut"></i>':`<button class="tool ${n.startsWith('more')?'slim':''}" aria-label="${n}">${svg(n)}</button>`).join('');
});
document.querySelectorAll('[data-art]').forEach(e=>e.innerHTML=svg(e.dataset.art));
document.getElementById('menus').innerHTML=[['文件','F'],['编辑','E'],['视图','V'],['插入','I'],['格式','O'],['工具','T'],['绘图','D'],['标注','N'],['修改','M'],['窗口','W'],['帮助','H']].map(([t,k])=>`<a href="#">${t}<span class="lat">(<u>${k}</u>)</span></a>`).join('');
document.getElementById('tasks').innerHTML=[['appicon','AutoCAD 2006 - [C:\\...','on'],['folder','C:\\Documents and Se...',''],['photo','02.jpg - Windows 图...','']].map(([i,t,c])=>`<button class="taskbtn ${c} d-flex align-items-center gap-1 px-2">${svg(i)}<span>${t}</span></button>`).join('');
// Ring with eight scallops, and the bore with four keys, both centred on 506,414.
const at=(r,a)=>{const t=a*Math.PI/180;return (506+r*Math.cos(t)).toFixed(1)+' '+(414+r*Math.sin(t)).toFixed(1)};
let g='M'+at(132,10.6);
for(let k=0;k<8;k++)g+=`A132 132 0 0 1 ${at(132,k*45+34.4)}A26 26 0 0 0 ${at(132,k*45+55.6)}`;
document.getElementById('gear').setAttribute('d',g);
let s='M'+at(72,-30);
for(let k=0;k<4;k++)s+=`A72 72 0 0 1 ${at(72,k*90+30)}L${at(57,k*90+30)}A57 57 0 0 1 ${at(57,k*90+60)}L${at(72,k*90+60)}`;
document.getElementById('bore').setAttribute('d',s);
</script>
</body>
</html>
